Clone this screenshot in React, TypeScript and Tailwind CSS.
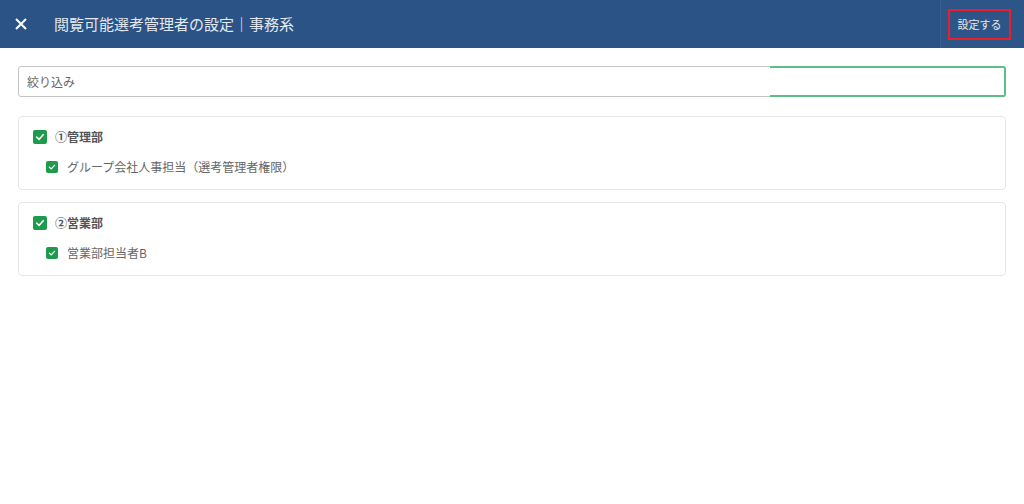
import React from "react";

const font = { fontFamily: '"Noto Sans CJK JP", "Noto Sans", sans-serif' };

function Check({ size }: { size: number }) {
  return (
    <span
      className="flex items-center justify-center rounded-[2px] bg-[#1e9a4b] shrink-0"
      style={{ width: size, height: size }}
    >
      <svg width={size - 4} height={size - 4} viewBox="0 0 12 12" fill="none">
        <path d="M2.2 6.2 L4.9 8.8 L9.8 3.4" stroke="white" strokeWidth="1.8" strokeLinecap="square" />
      </svg>
    </span>
  );
}

function Group({ title, item }: { title: string; item: string }) {
  return (
    <div className="mx-[18px] rounded-[4px] border border-[#e6e6e6] bg-white pl-[14px] pt-[13px] pb-[16px]">
      <div className="flex items-center h-[14px] gap-[8px]">
        <Check size={14} />
        <span className="text-[12px] font-bold text-[#555]">{title}</span>
      </div>
      <div className="mt-[17px] flex items-center h-[12px] gap-[9px] pl-[13px]">
        <Check size={12} />
        <span className="text-[12px] text-[#666]">{item}</span>
      </div>
    </div>
  );
}

export default function App() {
  return (
    <div className="w-[1024px] h-[504px] bg-white overflow-hidden" style={font}>
      <div className="h-[48px] bg-[#2b5385] flex items-stretch">
        <div className="w-[42px] flex items-center justify-center">
          <svg width="12" height="12" viewBox="0 0 12 12">
            <path d="M1 1 L11 11 M11 1 L1 11" stroke="white" strokeWidth="2" />
          </svg>
        </div>
        <div className="flex-1 flex items-center pl-[12px] text-[15px] text-[#e3e9f1]">
          閲覧可能選考管理者の設定｜事務系
        </div>
        <div className="w-[84px] border-l border-[#3a5f8f] bg-[#2d5587] flex items-center pl-[7px]">
          <div className="w-[63px] h-[31px] border-2 border-[#e8202a] flex items-center justify-center text-[11px] text-[#e3e9f1]">
            設定する
          </div>
        </div>
      </div>
      <div className="px-[18px] pt-[18px]">
        <div className="relative h-[31px] rounded-[3px] border border-[#c4c4c4] flex items-center pl-[8px] text-[12px] text-[#666]">
          絞り込み
          <div className="absolute top-[-1px] bottom-[-1px] right-[-1px] w-[236px] rounded-r-[3px] border-t-2 border-b-2 border-r-2 border-[#5cbf86]" />
        </div>
      </div>
      <div className="mt-[19px] flex flex-col gap-[12px]">
        <Group title="①管理部" item="グループ会社人事担当（選考管理者権限）" />
        <Group title="②営業部" item="営業部担当者B" />
      </div>
    </div>
  );
}
